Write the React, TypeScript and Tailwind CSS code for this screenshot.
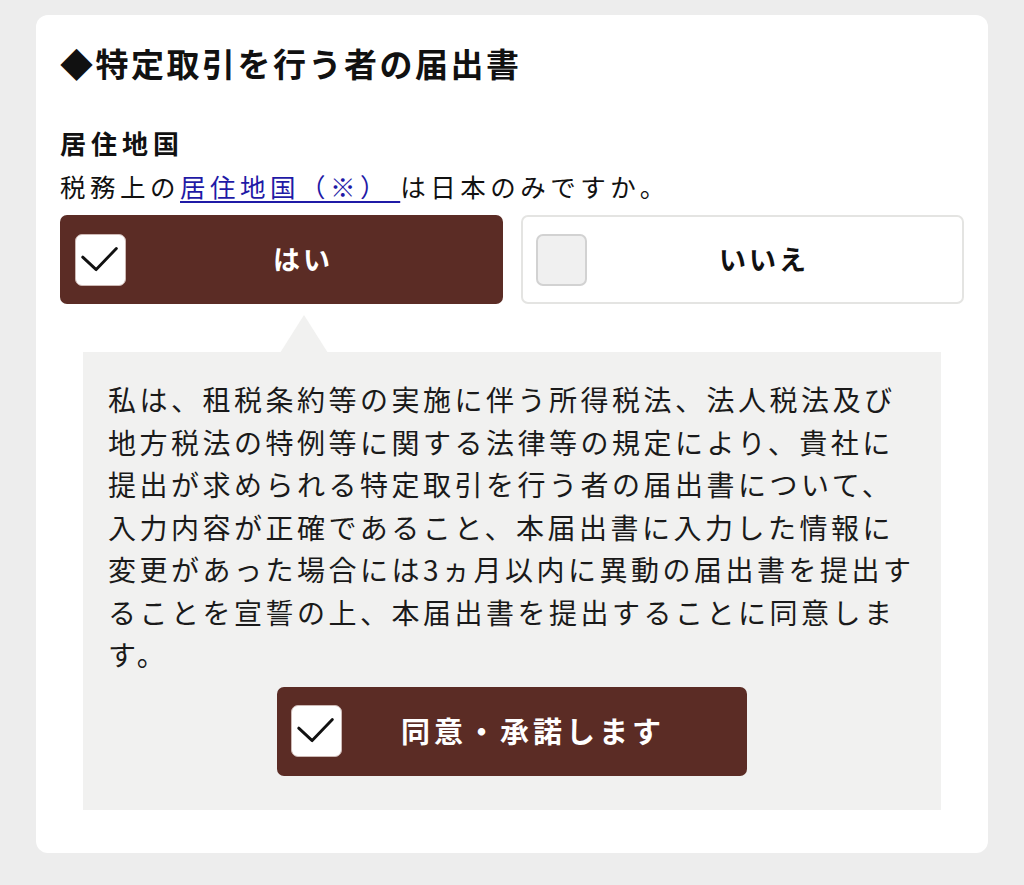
import React from "react";

const font = { fontFamily: '"Noto Sans CJK JP", "Noto Sans", sans-serif' };

const CheckBox = ({ checked }: { checked: boolean }) =>
  checked ? (
    <div className="w-[51px] h-[52px] shrink-0 rounded-[7px] bg-white border border-[#cdb9b5] flex items-center justify-center">
      <svg width="51" height="52" viewBox="0 0 51 52">
        <polyline
          points="7,23 21,36 42,14"
          fill="none"
          stroke="#111"
          strokeWidth="3"
          strokeLinecap="round"
          strokeLinejoin="round"
        />
      </svg>
    </div>
  ) : (
    <div className="w-[51px] h-[52px] shrink-0 rounded-[7px] bg-[#f0f0f0] border-2 border-[#d2d2d2]" />
  );

const Choice = ({ label, checked }: { label: string; checked: boolean }) => (
  <div
    className={
      checked
        ? "flex-1 h-[89px] rounded-[7px] bg-[#5b2c25] flex items-center pl-[15px] pr-[23px]"
        : "flex-1 h-[89px] rounded-[7px] bg-white border-2 border-[#e4e4e2] flex items-center pl-[13px] pr-[21px]"
    }
  >
    <CheckBox checked={checked} />
    <span
      className={
        checked
          ? "flex-1 text-center text-white font-bold text-[27px] tracking-[3px]"
          : "flex-1 text-center text-[#111] font-bold text-[27px] tracking-[3px]"
      }
    >
      {label}
    </span>
  </div>
);

export default function App() {
  return (
    <div className="min-h-[885px] bg-[#ededed] pt-[15px] px-[36px]" style={font}>
      <div className="bg-white rounded-[12px] pt-[24px] pb-[43px] px-[24px]">
        <h1 className="text-[33px] leading-[48px] font-bold tracking-[2.5px] text-[#111]">
          ◆特定取引を行う者の届出書
        </h1>

        <p className="mt-[36px] text-[26px] leading-[40px] font-bold tracking-[5px] text-[#111]">
          居住地国
        </p>
        <p className="text-[25.5px] leading-[46px] tracking-[4.5px] text-[#111]">
          税務上の
          <a className="text-[#1f1aa6] underline decoration-2 underline-offset-[4px]">居住地国（※） </a>
          は日本のみですか。
        </p>

        <div className="mt-[6px] flex gap-[18px]">
          <Choice label="はい" checked={true} />
          <Choice label="いいえ" checked={false} />
        </div>

        <div className="relative mt-[48px] mx-[23px] bg-[#f1f1f0] pt-[26px] pb-[34px]">
          <svg
            className="absolute left-[197px] -top-[37px]"
            width="48"
            height="38"
            viewBox="0 0 48 38"
          >
            <polygon points="24,0 48,38 0,38" fill="#f1f1f0" />
          </svg>
          <p className="pl-[25px] pr-[20px] text-[28px] leading-[42.5px] tracking-[3.5px] text-[#1a1a1a]">
            私は、租税条約等の実施に伴う所得税法、法人税法及び地方税法の特例等に関する法律等の規定により、貴社に提出が求められる特定取引を行う者の届出書について、入力内容が正確であること、本届出書に入力した情報に変更があった場合には3ヵ月以内に異動の届出書を提出することを宣誓の上、本届出書を提出することに同意します。
          </p>
          <div className="mt-[11px] flex justify-center">
            <div className="w-[470px] h-[89px] rounded-[7px] bg-[#5b2c25] flex items-center pl-[14px] pr-[23px]">
              <CheckBox checked={true} />
              <span className="flex-1 text-center text-white font-bold text-[29px] tracking-[4px]">
                同意・承諾します
              </span>
            </div>
          </div>
        </div>
      </div>
    </div>
  );
}
